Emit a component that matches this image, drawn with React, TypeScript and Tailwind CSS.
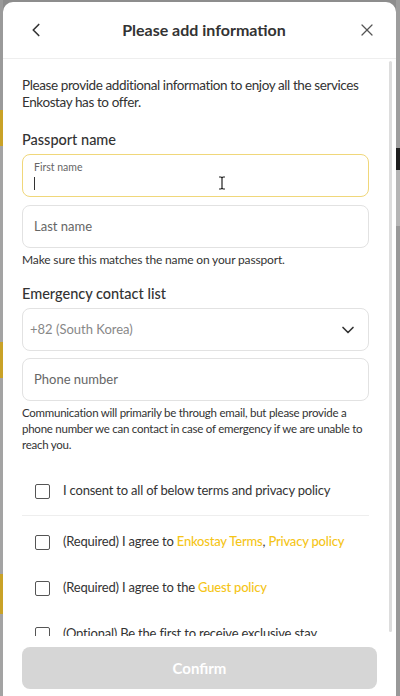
import { ChevronLeft, X, ChevronDown } from "lucide-react";

const font = { fontFamily: 'Lato, "Noto Sans", "Liberation Sans", sans-serif' };

function Checkbox() {
  return <span className="block w-[15px] h-[15px] border-[1.5px] border-[#555] rounded-[2px] shrink-0" />;
}

function TermRow({ children }: { children: React.ReactNode }) {
  return (
    <div className="flex items-center gap-[13px] pl-[13px] h-[46px] text-[13px] tracking-[-0.2px] text-[#333]">
      <Checkbox />
      <span className="whitespace-nowrap">{children}</span>
    </div>
  );
}

function IBeam() {
  return (
    <svg width="8" height="14" viewBox="0 0 8 14" className="ml-[183px]">
      <path d="M1 1h2l1 1 1-1h2M4 2v10M1 13h2l1-1 1 1h2" fill="none" stroke="#222" strokeWidth="1.2" />
    </svg>
  );
}

export default function App() {
  return (
    <div className="w-[400px] h-[696px] bg-[#8d8d8d] flex overflow-hidden" style={font}>
      {/* backdrop edge, left */}
      <div className="w-[3px] flex flex-col">
        <div className="h-[110px] bg-[#9a9a9a]" />
        <div className="h-[36px] bg-[#c9a227]" />
        <div className="h-[196px] bg-[#a3a3a3]" />
        <div className="h-[36px] bg-[#c9a227]" />
        <div className="h-[196px] bg-[#a3a3a3]" />
        <div className="h-[40px] bg-[#c9a227]" />
        <div className="flex-1 bg-[#a3a3a3]" />
      </div>

      <div className="flex-1 mt-[2px] bg-white rounded-t-[10px] flex flex-col min-w-0">
        {/* Header */}
        <div className="h-[57px] flex items-center justify-between px-[22px] border-b border-[#eeeeee] shrink-0">
          <ChevronLeft size={22} strokeWidth={1.8} className="text-[#333]" />
          <h1 className="text-[16px] font-bold text-[#333] ml-[4px]">Please add information</h1>
          <X size={20} strokeWidth={1.5} className="text-[#555] mr-[-3px]" />
        </div>

        {/* Scroll area */}
        <div className="flex-1 flex min-h-0">
          <div className="flex-1 overflow-hidden pl-[19px] pr-[20px] pt-[18px] min-w-0">
            <p className="text-[13.5px] tracking-[-0.4px] leading-[17px] text-[#333]">
              Please provide additional information to enjoy all the services Enkostay has to offer.
            </p>

            <h2 className="mt-[20px] text-[14.5px] leading-[18px] font-medium text-[#333]">Passport name</h2>
            <div className="mt-[5px] h-[43px] rounded-[8px] border border-[#f0d77a] px-[11px] pt-[5px]">
              <div className="text-[10.5px] text-[#666] leading-[14px]">First name</div>
              <div className="flex items-center h-[18px]">
                <span className="block w-px h-[13px] bg-[#333]" />
                <IBeam />
              </div>
            </div>
            <div className="mt-[8px] h-[43px] rounded-[8px] border border-[#e2e2e2] px-[11px] flex items-center text-[13px] text-[#666]">
              Last name
            </div>
            <p className="mt-[4px] text-[12px] tracking-[-0.15px] leading-[16px] text-[#333]">Make sure this matches the name on your passport.</p>

            <h2 className="mt-[17px] text-[14.5px] leading-[18px] font-medium text-[#333]">Emergency contact list</h2>
            <div className="mt-[5px] h-[43px] rounded-[8px] border border-[#e2e2e2] pl-[7px] pr-[10px] flex items-center justify-between text-[13px] text-[#888]">
              <span>+82 (South Korea)</span>
              <ChevronDown size={20} strokeWidth={2} className="text-[#333]" />
            </div>
            <div className="mt-[7px] h-[43px] rounded-[8px] border border-[#e2e2e2] px-[11px] flex items-center text-[13px] text-[#666]">
              Phone number
            </div>
            <p className="mt-[4px] text-[11.5px] tracking-[-0.25px] leading-[16px] text-[#333]">
              Communication will primarily be through email, but please provide a phone number we can contact in case of emergency if we are unable to reach you.
            </p>

            <div className="mt-[15px]">
              <TermRow>I consent to all of below terms and privacy policy</TermRow>
            </div>
            <div className="h-px bg-[#eeeeee] mt-[1px]" />
            <div className="pt-[3px]">
              <TermRow>
                (Required) I agree to <span className="text-[#f5c518] font-medium">Enkostay Terms</span>,{" "}
                <span className="text-[#f5c518] font-medium">Privacy policy</span>
              </TermRow>
              <TermRow>
                (Required) I agree to the <span className="text-[#f5c518] font-medium">Guest policy</span>
              </TermRow>
              <TermRow>(Optional) Be the first to receive exclusive stay</TermRow>
            </div>
          </div>
          {/* scrollbar */}
          <div className="w-[3px] bg-[#dddddd] rounded-full mt-[2px] mb-[4px] mr-[4px]" />
        </div>

        {/* Footer */}
        <div className="px-[19px] pt-[11px] pb-[7px] shrink-0">
          <button className="w-full h-[42px] rounded-[8px] bg-[#d6d6d6] text-white text-[15px] font-bold">
            Confirm
          </button>
        </div>
      </div>

      {/* backdrop edge, right */}
      <div className="w-[4px] flex flex-col">
        <div className="h-[148px] bg-[#9d9d9d]" />
        <div className="h-[22px] bg-[#1e1e1e]" />
        <div className="h-[56px] bg-[#b5b5b5]" />
        <div className="flex-1 bg-[#999999]" />
      </div>
    </div>
  );
}
